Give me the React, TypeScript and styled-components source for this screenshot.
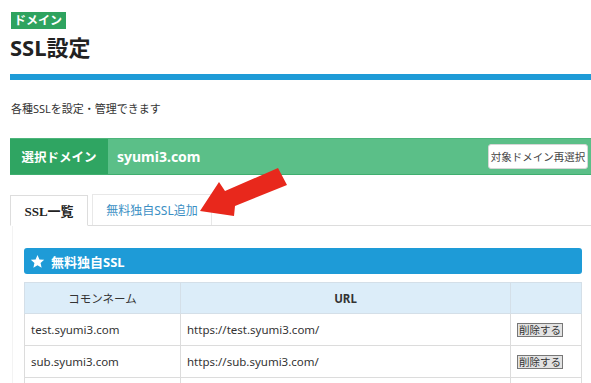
import React from "react";
import styled, { createGlobalStyle } from "styled-components";

const Global = createGlobalStyle`
  html, body { margin: 0; padding: 0; background: #fff; overflow: hidden; }
  body { font-family: "Noto Sans", "Noto Sans CJK JP", sans-serif; color: #333; }
`;

const Page = styled.div`
  position: relative;
  width: 585px;
  padding: 12px 0 0 10px;
`;

const Badge = styled.div`
  width: fit-content;
  background: #2ea35f;
  color: #fff;
  font-size: 12px;
  font-weight: 700;
  line-height: 17px;
  height: 17px;
  padding: 0 4px 0 3px;
  margin-left: 1px;
`;

const Title = styled.h1`
  margin: 3px 0 0 0;
  font-size: 22px;
  font-weight: 700;
  line-height: 30px;
  color: #222;
`;

const BlueBar = styled.div`
  height: 6px;
  background: #1e9bd7;
  margin-top: 12px;
`;

const Desc = styled.p`
  margin: 21px 0 0 1px;
  font-size: 11px;
  line-height: 16px;
  color: #333;
`;

const DomainBar = styled.div`
  display: flex;
  align-items: stretch;
  height: 37px;
  margin-top: 21px;
  background: #5bbf88;
  border-top: 1px solid #4db57b;
  border-bottom: 1px solid #3fae6f;
  box-sizing: border-box;
`;

const DomainLabel = styled.div`
  width: 98px;
  background: #2fa562;
  color: #fff;
  font-size: 12.5px;
  font-weight: 700;
  display: flex;
  align-items: center;
  justify-content: center;
`;

const DomainName = styled.div`
  flex: 1;
  color: #fff;
  font-size: 14px;
  font-weight: 700;
  display: flex;
  align-items: center;
  padding-left: 9px;
`;

const ReselectButton = styled.button`
  align-self: center;
  margin-right: 7px;
  height: 25px;
  width: 100px;
  background: #fff;
  border: 1px solid #d6d6d6;
  border-radius: 3px;
  font-family: "Noto Sans CJK JP", sans-serif;
  font-size: 10.5px;
  color: #444;
  padding: 0;
`;

const Tabs = styled.div`
  display: flex;
  align-items: flex-end;
  margin-top: 18px;
  height: 32px;
  border-bottom: 1px solid #ddd;
  gap: 4px;
`;

const Tab = styled.div<{ $active?: boolean }>`
  height: 31px;
  box-sizing: border-box;
  display: flex;
  align-items: center;
  justify-content: center;
  white-space: nowrap;
  padding: 0;
  border: 1px solid ${(p) => (p.$active ? "#ddd" : "#e8e8e8")};
  border-bottom: ${(p) => (p.$active ? "1px solid #fff" : "none")};
  margin-bottom: ${(p) => (p.$active ? "-1px" : "0")};
  background: #fff;
  font-family: ${(p) =>
    p.$active
      ? `"Liberation Serif", "Noto Sans CJK JP", serif`
      : `"Noto Sans", "Noto Sans CJK JP", sans-serif`};
  font-weight: ${(p) => (p.$active ? 700 : 400)};
  font-size: ${(p) => (p.$active ? "13px" : "12px")};
  color: ${(p) => (p.$active ? "#222" : "#3b8fc4")};
  width: ${(p) => (p.$active ? "78px" : "120px")};
`;

const TabBody = styled.div`
  padding: 22px 13px 0 13px;
  border-left: 1px solid #f3f3f3;
  margin-left: 2px;
`;

const CardHeader = styled.div`
  display: flex;
  align-items: center;
  gap: 6px;
  height: 26px;
  background: #1e9bd7;
  border-radius: 3px;
  color: #fff;
  font-size: 13px;
  font-weight: 700;
  padding-left: 6px;
  margin-left: -2px;
`;

const Table = styled.table`
  width: calc(100% + 2px);
  margin: 8px 0 0 -2px;
  border-collapse: collapse;
  font-size: 11.5px;
  color: #333;
`;

const Th = styled.th<{ $w?: number; $bold?: boolean }>`
  background: #dcedf9;
  border: 1px solid #d4dfe8;
  height: 30px;
  font-weight: ${(p) => (p.$bold ? 700 : 400)};
  font-size: 11.5px;
  color: #333;
  text-align: center;
  padding: 0;
  width: ${(p) => (p.$w ? `${p.$w}px` : "auto")};
`;

const Td = styled.td`
  border: 1px solid #dcdcdc;
  height: 31px;
  padding: 0 0 0 6px;
  text-align: left;
`;

const DeleteButton = styled.button`
  font-family: "Noto Sans CJK JP", sans-serif;
  font-size: 10.5px;
  line-height: 11px;
  height: 14px;
  padding: 0 1px;
  background: #e3e3e3;
  border: 1px solid #777;
  color: #333;
  border-radius: 0;
`;

const Arrow = styled.svg`
  position: absolute;
  left: 198px;
  top: 165px;
`;

const rows = [
  { name: "test.syumi3.com", url: "https://test.syumi3.com/" },
  { name: "sub.syumi3.com", url: "https://sub.syumi3.com/" },
  { name: "", url: "" },
];

export default function App() {
  return (
    <>
      <Global />
      <Page>
        <Badge>ドメイン</Badge>
        <Title>SSL設定</Title>
        <BlueBar />
        <Desc>各種SSLを設定・管理できます</Desc>
        <DomainBar>
          <DomainLabel>選択ドメイン</DomainLabel>
          <DomainName>syumi3.com</DomainName>
          <ReselectButton>対象ドメイン再選択</ReselectButton>
        </DomainBar>
        <Tabs>
          <Tab $active>SSL一覧</Tab>
          <Tab>無料独自SSL追加</Tab>
        </Tabs>
        <TabBody>
          <CardHeader>
            <svg width="15" height="15" viewBox="0 0 24 24">
              <path
                fill="#fff"
                d="M12 1.5l3.1 7.1 7.6.7-5.8 5.1 1.7 7.5L12 18l-6.6 3.9 1.7-7.5L1.3 9.3l7.6-.7z"
              />
            </svg>
            無料独自SSL
          </CardHeader>
          <Table>
            <thead>
              <tr>
                <Th $w={155}>コモンネーム</Th>
                <Th $w={329} $bold>
                  URL
                </Th>
                <Th />
              </tr>
            </thead>
            <tbody>
              {rows.map((r, i) => (
                <tr key={i}>
                  <Td>{r.name}</Td>
                  <Td>{r.url}</Td>
                  <Td>{r.name && <DeleteButton>削除する</DeleteButton>}</Td>
                </tr>
              ))}
            </tbody>
          </Table>
        </TabBody>
        <Arrow width="95" height="55" viewBox="0 0 95 55">
          <path
            fill="#e8281c"
            d="M2 46 L21 17 L27 26 L80 3 L89 20 L37 41 L36 51 Z"
          />
        </Arrow>
      </Page>
    </>
  );
}
